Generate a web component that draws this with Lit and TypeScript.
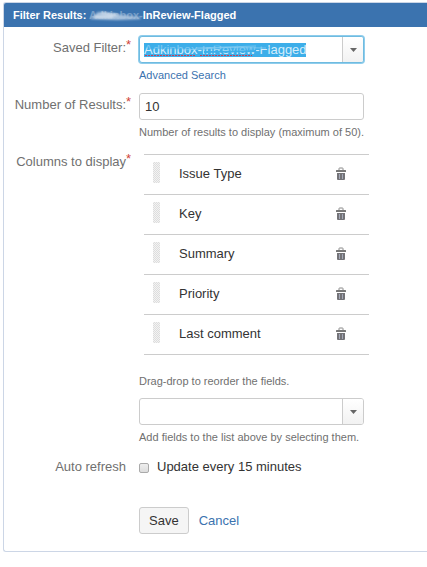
import { LitElement, html, css, svg } from "lit";
import { customElement, property, state } from "lit/decorators.js";

const trashIcon = svg`
  <svg viewBox="0 0 12 14" width="12" height="14" aria-hidden="true">
    <path d="M4 3V1.500Q4 1 4.500 1H7.500Q8 1 8 1.500V3" fill="none" stroke="#888" stroke-width="1" />
    <rect x="1" y="3" width="10" height="2" rx="0.500" fill="#777" />
    <path d="M2 6H10V12Q10 13 9 13H3Q2 13 2 12Z" fill="#737377" />
    <path d="M4.500 7V12M7.500 7V12" stroke="#a4a8b8" stroke-width="1" />
  </svg>`;

@customElement("combo-box")
export class ComboBox extends LitElement {
  @property() label = "";
  @property() value = "";
  @property({ type: Boolean }) active = false;

  static styles = css`
    :host {
      display: block;
    }
    .box {
      position: relative;
      display: flex;
      box-sizing: border-box;
      height: 27px;
      border: 1px solid #ccc;
      border-radius: 3px;
      background: #fff;
      overflow: hidden;
    }
    .box.active {
      border-color: #6fbbe0;
      box-shadow: 0 0 0 1px #8fcdec;
    }
    input {
      flex: 1;
      min-width: 0;
      border: 0;
      outline: 0;
      padding: 0 4px;
      background: transparent;
      font: 13px "Liberation Sans", Arial, sans-serif;
      color: #333;
    }
    .active input {
      color: #d3edfb;
      background: linear-gradient(#3daee9, #3daee9) 4px 6px / 162px 14px no-repeat;
    }
    button {
      width: 21px;
      padding: 0;
      border: 0;
      border-left: 1px solid #ccc;
      background: linear-gradient(#fff, #f2f2f2);
      display: flex;
      align-items: center;
      justify-content: center;
    }
    .smear {
      position: absolute;
      left: 4px;
      top: 5px;
    }
  `;

  render() {
    return html`
      <div class="box ${this.active ? "active" : ""}">
        <input type="text" aria-label=${this.label} .value=${this.value} spellcheck="false" />
        ${this.active
          ? html`<svg class="smear" width="158" height="16" viewBox="0 0 158 16" aria-hidden="true">
              <path d="M2 3L120 2L126 6L110 8L4 7Z" fill="#3daee9" opacity="0.600" />
              <path d="M44 4Q85 1 124 4M60 10L112 9" fill="none" stroke="#3daee9" stroke-width="2" />
              <path d="M40 8Q80 4 122 6M52 6L112 4" fill="none" stroke="#8bcff2" stroke-width="1" opacity="0.700" />
              <path d="M1 13.500H52M56 13.500H108" stroke="#c3415c" stroke-width="1" stroke-dasharray="2 1" />
            </svg>`
          : ""}
        <button type="button" aria-label="Show options">
          <svg width="7" height="4" viewBox="0 0 7 4" aria-hidden="true">
            <path d="M0 0H7L3.500 4Z" fill="#666" />
          </svg>
        </button>
      </div>
    `;
  }
}

@customElement("app-root")
export class AppRoot extends LitElement {
  @state() private columns = ["Issue Type", "Key", "Summary", "Priority", "Last comment"];

  static styles = css`
    :host {
      display: block;
      padding: 2px 0 0 3px;
      font: 13px/18px "Liberation Sans", Arial, sans-serif;
      color: #333;
      background: #fff;
    }
    .panel {
      border: 1px solid #ccd6e6;
      border-right: 0;
      border-radius: 3px 0 0 3px;
      overflow: hidden;
    }
    h1 {
      margin: 0;
      padding: 0 9px;
      background: #3b73af;
      color: #fff;
      font-size: 11px;
      line-height: 24px;
    }
    .name {
      position: relative;
    }
    .cover {
      position: absolute;
      left: 0;
      top: 0;
    }
    .stroke {
      filter: blur(1px);
    }
    form {
      display: grid;
      grid-template-columns: 122px minmax(0, 225px);
      gap: 1px 13px;
      padding: 9px 0 17px;
    }
    .label {
      padding-top: 3px;
      text-align: right;
      color: #707070;
    }
    .required {
      position: relative;
    }
    .required::after {
      content: "*";
      position: absolute;
      left: 100%;
      top: -4px;
      color: #d04437;
    }
    .hint {
      margin: 3px 0 8px;
      font-size: 11px;
      color: #707070;
      white-space: nowrap;
    }
    a {
      color: #3b73af;
      text-decoration: none;
    }
    .number {
      box-sizing: border-box;
      display: block;
      width: 100%;
      height: 27px;
      padding: 0 5px;
      border: 1px solid #ccc;
      border-radius: 3px;
      font: inherit;
      color: #333;
    }
    ul {
      list-style: none;
      width: 100%;
      margin: 4px 0 17px 5px;
      padding: 0;
      border-top: 1px solid #ccc;
    }
    li {
      display: flex;
      align-items: center;
      box-sizing: border-box;
      height: 40px;
      padding: 0 22px 2px 9px;
      border-bottom: 1px solid #ccc;
    }
    .grip {
      width: 7px;
      height: 21px;
      margin: 0 19px 2px 0;
      background: repeating-conic-gradient(#ddd 0 25%, #f3f3f3 0 50%) 0 0 / 2px 2px;
    }
    .title {
      flex: 1;
    }
    .remove {
      display: flex;
      padding: 0;
      border: 0;
      background: none;
    }
    .check {
      display: flex;
      align-items: center;
      padding-top: 3px;
    }
    .check input {
      appearance: none;
      box-sizing: border-box;
      width: 10px;
      height: 10px;
      margin: 2px 8px 0 0;
      border: 1px solid #aaa;
      border-radius: 2px;
      background: linear-gradient(#eee, #ddd);
    }
    .actions {
      grid-column: 2;
      display: flex;
      align-items: center;
      gap: 10px;
      padding-top: 30px;
    }
    .save {
      height: 27px;
      padding: 0 9px;
      border: 1px solid #ccc;
      border-radius: 3px;
      background: #f5f5f5;
      font: inherit;
      color: #333;
    }
  `;

  private remove(name: string) {
    this.columns = this.columns.filter((c) => c !== name);
  }

  render() {
    return html`
      <section class="panel">
        <h1>
          Filter Results:
          <span class="name"
            >Adkinbox-InReview-Flagged<svg class="cover" width="54" height="14" viewBox="0 0 54 14" aria-hidden="true">
              <path d="M0 0H54V14H0Z" fill="#3b73af" opacity="0.700" />
              <path class="stroke" d="M1 10L9 3L26 5L50 8L52 10L28 11Z" fill="#a9c2dd" />
              <path class="stroke" d="M6 8L24 8M12 4L28 6" fill="none" stroke="#d5e1ee" stroke-width="2" /></svg
          ></span>
        </h1>
        <form @submit=${(e: Event) => e.preventDefault()}>
          <div class="label"><span class="required">Saved Filter:</span></div>
          <div>
            <combo-box label="Saved Filter" value="Adkinbox-InReview-Flagged" active></combo-box>
            <div class="hint"><a href="#search">Advanced Search</a></div>
          </div>

          <label class="label" for="count"><span class="required">Number of Results:</span></label>
          <div>
            <input class="number" id="count" type="text" value="10" />
            <div class="hint">Number of results to display (maximum of 50).</div>
          </div>

          <div class="label"><span class="required">Columns to display</span></div>
          <div>
            <ul>
              ${this.columns.map(
                (name) => html`<li>
                  <span class="grip"></span>
                  <span class="title">${name}</span>
                  <button class="remove" type="button" aria-label="Remove ${name}" @click=${() => this.remove(name)}>
                    ${trashIcon}
                  </button>
                </li>`
              )}
            </ul>
            <div class="hint">Drag-drop to reorder the fields.</div>
            <combo-box label="Add fields"></combo-box>
            <div class="hint">Add fields to the list above by selecting them.</div>
          </div>

          <div class="label">Auto refresh</div>
          <label class="check"><input type="checkbox" />Update every 15 minutes</label>

          <div class="actions">
            <button class="save" type="submit">Save</button>
            <a href="#cancel">Cancel</a>
          </div>
        </form>
      </section>
    `;
  }
}
